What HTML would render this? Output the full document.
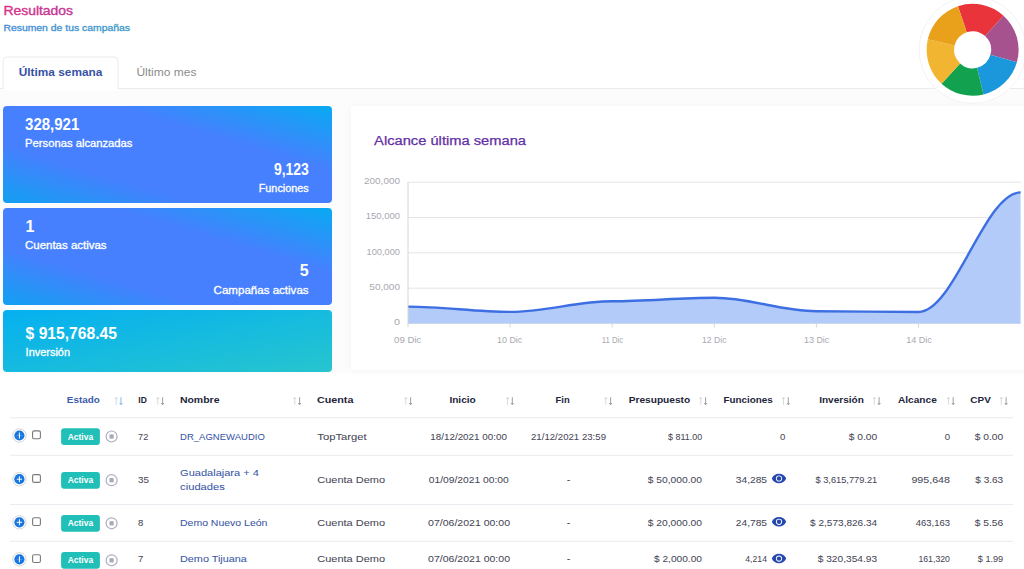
<!DOCTYPE html>
<html><head><meta charset="utf-8">
<style>
*{margin:0;padding:0}
html,body{width:1024px;height:569px;overflow:hidden;background:#fff}
svg{display:block;font-family:"Liberation Sans",sans-serif}
</style></head><body>
<svg width="1024" height="569" viewBox="0 0 1024 569">
<rect x="0" y="88" width="1024" height="481" fill="#fcfcfc"/>
<rect x="0" y="373" width="1024" height="196" fill="#ffffff"/>
<rect x="0" y="88" width="1024" height="1" fill="#ebebeb"/>
<path d="M3,89 V61 Q3,57 7,57 H114 Q118,57 118,61 V89 Z" fill="#fff" stroke="#ebebeb" stroke-width="1"/>
<rect x="3.5" y="88" width="114" height="2" fill="#fff"/>
<defs>
<linearGradient id="g1" x1="0" y1="1" x2="1" y2="0" gradientUnits="objectBoundingBox">
<stop offset="0" stop-color="#12a0f2"/><stop offset="0.3" stop-color="#4780fe"/><stop offset="0.66" stop-color="#4780fe"/><stop offset="1" stop-color="#08aaf2"/>
</linearGradient>
<linearGradient id="g3" x1="0" y1="0" x2="1" y2="1">
<stop offset="0" stop-color="#05b0f0"/><stop offset="1" stop-color="#26c5ce"/>
</linearGradient>
<linearGradient id="gt" x1="0" y1="0" x2="1" y2="0"><stop offset="0" stop-color="#d83287"/><stop offset="1" stop-color="#bf3595"/></linearGradient>
<linearGradient id="gs" x1="0" y1="0" x2="1" y2="0"><stop offset="0" stop-color="#3f8bd6"/><stop offset="1" stop-color="#3a9bc8"/></linearGradient>
<filter id="sh" x="-10%" y="-20%" width="120%" height="140%"><feGaussianBlur stdDeviation="5"/></filter>
</defs>
<rect x="3" y="106" width="329" height="97" rx="4" fill="url(#g1)"/>
<rect x="3" y="208" width="329" height="97" rx="4" fill="url(#g1)"/>
<rect x="3" y="310" width="329" height="62" rx="4" fill="url(#g3)"/>
<rect x="351" y="106" width="680" height="264" fill="#000" opacity="0.035" filter="url(#sh)"/>
<rect x="351" y="106" width="680" height="264" fill="#fff"/>
<line x1="408" y1="182.2" x2="1021" y2="182.2" stroke="#e4e4e4" stroke-width="1"/>
<line x1="408" y1="217.5" x2="1021" y2="217.5" stroke="#e4e4e4" stroke-width="1"/>
<line x1="408" y1="252.8" x2="1021" y2="252.8" stroke="#e4e4e4" stroke-width="1"/>
<line x1="408" y1="288.2" x2="1021" y2="288.2" stroke="#e4e4e4" stroke-width="1"/>
<line x1="408" y1="323.5" x2="1021" y2="323.5" stroke="#e4e4e4" stroke-width="1"/>
<text x="364" y="184.0" textLength="36.0" lengthAdjust="spacingAndGlyphs" font-size="9" fill="#a9a9b0">200,000</text>
<text x="365.8" y="219.3" textLength="34.2" lengthAdjust="spacingAndGlyphs" font-size="9" fill="#a9a9b0">150,000</text>
<text x="366.5" y="254.6" textLength="33.5" lengthAdjust="spacingAndGlyphs" font-size="9" fill="#a9a9b0">100,000</text>
<text x="369.3" y="290.0" textLength="30.7" lengthAdjust="spacingAndGlyphs" font-size="9" fill="#a9a9b0">50,000</text>
<text x="394" y="325.3" textLength="6.0" lengthAdjust="spacingAndGlyphs" font-size="9" fill="#a9a9b0">0</text>
<path d="M408.0,306.6 C443.7,306.6 474.4,311.9 510.1,311.9 C545.8,311.9 576.5,301.3 612.2,301.3 C647.9,301.3 678.6,297.8 714.3,297.8 C750.0,297.8 780.7,311.2 816.4,311.2 C852.1,311.2 882.8,312.0 918.5,312.0 C954.2,312.0 984.9,192.4 1020.6,192.4 L1020.6,323.5 L408.0,323.5 Z" fill="#b2cbf8"/>
<path d="M408.0,306.6 C443.7,306.6 474.4,311.9 510.1,311.9 C545.8,311.9 576.5,301.3 612.2,301.3 C647.9,301.3 678.6,297.8 714.3,297.8 C750.0,297.8 780.7,311.2 816.4,311.2 C852.1,311.2 882.8,312.0 918.5,312.0 C954.2,312.0 984.9,192.4 1020.6,192.4" fill="none" stroke="#3d6fe2" stroke-width="2.4"/>
<line x1="408" y1="182" x2="408" y2="327" stroke="#d6d6d6" stroke-width="1"/>
<line x1="510.1" y1="323.5" x2="510.1" y2="327.5" stroke="#d6d6d6" stroke-width="1"/>
<line x1="612.2" y1="323.5" x2="612.2" y2="327.5" stroke="#d6d6d6" stroke-width="1"/>
<line x1="714.3" y1="323.5" x2="714.3" y2="327.5" stroke="#d6d6d6" stroke-width="1"/>
<line x1="816.4" y1="323.5" x2="816.4" y2="327.5" stroke="#d6d6d6" stroke-width="1"/>
<line x1="918.5" y1="323.5" x2="918.5" y2="327.5" stroke="#d6d6d6" stroke-width="1"/>
<text x="394" y="342.8" textLength="27.4" lengthAdjust="spacingAndGlyphs" font-size="9" fill="#a9a9b0">09 Dic</text>
<text x="497" y="342.8" textLength="25.3" lengthAdjust="spacingAndGlyphs" font-size="9" fill="#a9a9b0">10 Dic</text>
<text x="601.8" y="342.8" textLength="21.4" lengthAdjust="spacingAndGlyphs" font-size="9" fill="#a9a9b0">11 Dic</text>
<text x="702" y="342.8" textLength="24.6" lengthAdjust="spacingAndGlyphs" font-size="9" fill="#a9a9b0">12 Dic</text>
<text x="804" y="342.8" textLength="25.3" lengthAdjust="spacingAndGlyphs" font-size="9" fill="#a9a9b0">13 Dic</text>
<text x="906.2" y="342.8" textLength="25.7" lengthAdjust="spacingAndGlyphs" font-size="9" fill="#a9a9b0">14 Dic</text>
<circle cx="972.6" cy="50" r="53.5" fill="#fff" stroke="#f3f3f3" stroke-width="1"/>
<path d="M958.00,6.18 A46,46 0 0 1 1003.50,15.72 L985.03,36.10 A18.5,18.5 0 0 0 966.73,32.26 Z" fill="#e9343c"/>
<path d="M1003.50,15.72 A46,46 0 0 1 1016.88,62.25 L990.41,54.81 A18.5,18.5 0 0 0 985.03,36.10 Z" fill="#a6528f"/>
<path d="M1016.88,62.25 A46,46 0 0 1 983.57,94.47 L977.01,67.77 A18.5,18.5 0 0 0 990.41,54.81 Z" fill="#1b98dc"/>
<path d="M983.57,94.47 A46,46 0 0 1 941.52,83.71 L960.10,63.44 A18.5,18.5 0 0 0 977.01,67.77 Z" fill="#12a24f"/>
<path d="M941.52,83.71 A46,46 0 0 1 927.80,39.37 L954.58,45.61 A18.5,18.5 0 0 0 960.10,63.44 Z" fill="#f1b531"/>
<path d="M927.80,39.37 A46,46 0 0 1 958.00,6.18 L966.73,32.26 A18.5,18.5 0 0 0 954.58,45.61 Z" fill="#e9a11b"/>
<rect x="10" y="417.3" width="1003" height="1" fill="#eaeaf0"/>
<rect x="10" y="454.8" width="1003" height="1" fill="#eaeaf0"/>
<rect x="10" y="504.0" width="1003" height="1" fill="#eaeaf0"/>
<rect x="10" y="540.8" width="1003" height="1" fill="#eaeaf0"/>
<path d="M116.2,404.8 V398.0" stroke="#c9cbe0" stroke-width="0.8"/><path d="M114.9,399.0 L116.2,397.2 L117.5,399.0" fill="none" stroke="#c9cbe0" stroke-width="0.8"/><path d="M121.0,397.2 V404.0" stroke="#5fa4ea" stroke-width="0.8"/><path d="M119.7,403.0 L121.0,404.8 L122.3,403.0" fill="none" stroke="#5fa4ea" stroke-width="0.8"/>
<path d="M157.8,404.8 V398.0" stroke="#cfcfd4" stroke-width="0.8"/><path d="M156.5,399.0 L157.8,397.2 L159.10000000000002,399.0" fill="none" stroke="#cfcfd4" stroke-width="0.8"/><path d="M162.6,397.2 V404.0" stroke="#85858d" stroke-width="0.8"/><path d="M161.29999999999998,403.0 L162.6,404.8 L163.9,403.0" fill="none" stroke="#85858d" stroke-width="0.8"/>
<path d="M294.8,404.8 V398.0" stroke="#cfcfd4" stroke-width="0.8"/><path d="M293.5,399.0 L294.8,397.2 L296.1,399.0" fill="none" stroke="#cfcfd4" stroke-width="0.8"/><path d="M299.6,397.2 V404.0" stroke="#85858d" stroke-width="0.8"/><path d="M298.3,403.0 L299.6,404.8 L300.90000000000003,403.0" fill="none" stroke="#85858d" stroke-width="0.8"/>
<path d="M405.8,404.8 V398.0" stroke="#cfcfd4" stroke-width="0.8"/><path d="M404.5,399.0 L405.8,397.2 L407.1,399.0" fill="none" stroke="#cfcfd4" stroke-width="0.8"/><path d="M410.6,397.2 V404.0" stroke="#85858d" stroke-width="0.8"/><path d="M409.3,403.0 L410.6,404.8 L411.90000000000003,403.0" fill="none" stroke="#85858d" stroke-width="0.8"/>
<path d="M507.5,404.8 V398.0" stroke="#cfcfd4" stroke-width="0.8"/><path d="M506.2,399.0 L507.5,397.2 L508.8,399.0" fill="none" stroke="#cfcfd4" stroke-width="0.8"/><path d="M512.3,397.2 V404.0" stroke="#85858d" stroke-width="0.8"/><path d="M510.99999999999994,403.0 L512.3,404.8 L513.5999999999999,403.0" fill="none" stroke="#85858d" stroke-width="0.8"/>
<path d="M605.8,404.8 V398.0" stroke="#cfcfd4" stroke-width="0.8"/><path d="M604.5,399.0 L605.8,397.2 L607.0999999999999,399.0" fill="none" stroke="#cfcfd4" stroke-width="0.8"/><path d="M610.6,397.2 V404.0" stroke="#85858d" stroke-width="0.8"/><path d="M609.3000000000001,403.0 L610.6,404.8 L611.9,403.0" fill="none" stroke="#85858d" stroke-width="0.8"/>
<path d="M700.8,404.8 V398.0" stroke="#cfcfd4" stroke-width="0.8"/><path d="M699.5,399.0 L700.8,397.2 L702.0999999999999,399.0" fill="none" stroke="#cfcfd4" stroke-width="0.8"/><path d="M705.6,397.2 V404.0" stroke="#85858d" stroke-width="0.8"/><path d="M704.3000000000001,403.0 L705.6,404.8 L706.9,403.0" fill="none" stroke="#85858d" stroke-width="0.8"/>
<path d="M783.5,404.8 V398.0" stroke="#cfcfd4" stroke-width="0.8"/><path d="M782.2,399.0 L783.5,397.2 L784.8,399.0" fill="none" stroke="#cfcfd4" stroke-width="0.8"/><path d="M788.3000000000001,397.2 V404.0" stroke="#85858d" stroke-width="0.8"/><path d="M787.0000000000001,403.0 L788.3000000000001,404.8 L789.6,403.0" fill="none" stroke="#85858d" stroke-width="0.8"/>
<path d="M874.3,404.8 V398.0" stroke="#cfcfd4" stroke-width="0.8"/><path d="M873.0,399.0 L874.3,397.2 L875.5999999999999,399.0" fill="none" stroke="#cfcfd4" stroke-width="0.8"/><path d="M879.1,397.2 V404.0" stroke="#85858d" stroke-width="0.8"/><path d="M877.8000000000001,403.0 L879.1,404.8 L880.4,403.0" fill="none" stroke="#85858d" stroke-width="0.8"/>
<path d="M948.4,404.8 V398.0" stroke="#cfcfd4" stroke-width="0.8"/><path d="M947.1,399.0 L948.4,397.2 L949.6999999999999,399.0" fill="none" stroke="#cfcfd4" stroke-width="0.8"/><path d="M953.2,397.2 V404.0" stroke="#85858d" stroke-width="0.8"/><path d="M951.9000000000001,403.0 L953.2,404.8 L954.5,403.0" fill="none" stroke="#85858d" stroke-width="0.8"/>
<path d="M1001.3,404.8 V398.0" stroke="#cfcfd4" stroke-width="0.8"/><path d="M1000.0,399.0 L1001.3,397.2 L1002.5999999999999,399.0" fill="none" stroke="#cfcfd4" stroke-width="0.8"/><path d="M1006.1,397.2 V404.0" stroke="#85858d" stroke-width="0.8"/><path d="M1004.8000000000001,403.0 L1006.1,404.8 L1007.4,403.0" fill="none" stroke="#85858d" stroke-width="0.8"/>
<circle cx="19.4" cy="435.5" r="6.7" fill="#fff" stroke="#d6d6d6" stroke-width="1"/>
<circle cx="19.4" cy="435.5" r="5.1" fill="#1877e0"/>
<path d="M19.4,432.5 V438.5" stroke="#fff" stroke-width="1"/>
<path d="M16.7,435.5 H22.1" stroke="#fff" stroke-width="0.5" opacity="0.5"/>
<rect x="32.6" y="430.9" width="7.8" height="7.8" rx="1.5" fill="#fff" stroke="#7a7a7a" stroke-width="1.1"/>
<rect x="61.1" y="428.2" width="38.8" height="16.8" rx="3" fill="#20bfb8"/>
<text x="67.7" y="439.6" textLength="25.4" lengthAdjust="spacingAndGlyphs" font-size="8.3" font-weight="bold" fill="#fff">Activa</text>
<circle cx="111.6" cy="436.5" r="5.5" fill="none" stroke="#aeaebf" stroke-width="1.2"/>
<rect x="109.5" y="434.4" width="4.2" height="4.2" fill="#a8a8bc"/>
<circle cx="19.4" cy="479.2" r="6.7" fill="#fff" stroke="#d6d6d6" stroke-width="1"/>
<circle cx="19.4" cy="479.2" r="5.1" fill="#1877e0"/>
<path d="M19.4,476.2 V482.2" stroke="#fff" stroke-width="1"/>
<path d="M16.7,479.2 H22.1" stroke="#fff" stroke-width="1" opacity="1"/>
<rect x="32.6" y="474.59999999999997" width="7.8" height="7.8" rx="1.5" fill="#fff" stroke="#7a7a7a" stroke-width="1.1"/>
<rect x="61.1" y="471.9" width="38.8" height="16.8" rx="3" fill="#20bfb8"/>
<text x="67.7" y="483.3" textLength="25.4" lengthAdjust="spacingAndGlyphs" font-size="8.3" font-weight="bold" fill="#fff">Activa</text>
<circle cx="111.6" cy="480.2" r="5.5" fill="none" stroke="#aeaebf" stroke-width="1.2"/>
<rect x="109.5" y="478.09999999999997" width="4.2" height="4.2" fill="#a8a8bc"/>
<circle cx="19.4" cy="522.3" r="6.7" fill="#fff" stroke="#d6d6d6" stroke-width="1"/>
<circle cx="19.4" cy="522.3" r="5.1" fill="#1877e0"/>
<path d="M19.4,519.3 V525.3" stroke="#fff" stroke-width="1"/>
<path d="M16.7,522.3 H22.1" stroke="#fff" stroke-width="1" opacity="1"/>
<rect x="32.6" y="517.6999999999999" width="7.8" height="7.8" rx="1.5" fill="#fff" stroke="#7a7a7a" stroke-width="1.1"/>
<rect x="61.1" y="515.0" width="38.8" height="16.8" rx="3" fill="#20bfb8"/>
<text x="67.7" y="526.4" textLength="25.4" lengthAdjust="spacingAndGlyphs" font-size="8.3" font-weight="bold" fill="#fff">Activa</text>
<circle cx="111.6" cy="523.3" r="5.5" fill="none" stroke="#aeaebf" stroke-width="1.2"/>
<rect x="109.5" y="521.1999999999999" width="4.2" height="4.2" fill="#a8a8bc"/>
<circle cx="19.4" cy="559.3" r="6.7" fill="#fff" stroke="#d6d6d6" stroke-width="1"/>
<circle cx="19.4" cy="559.3" r="5.1" fill="#1877e0"/>
<path d="M19.4,556.3 V562.3" stroke="#fff" stroke-width="1"/>
<path d="M16.7,559.3 H22.1" stroke="#fff" stroke-width="0.5" opacity="0.5"/>
<rect x="32.6" y="554.6999999999999" width="7.8" height="7.8" rx="1.5" fill="#fff" stroke="#7a7a7a" stroke-width="1.1"/>
<rect x="61.1" y="552.0" width="38.8" height="16.8" rx="3" fill="#20bfb8"/>
<text x="67.7" y="563.4" textLength="25.4" lengthAdjust="spacingAndGlyphs" font-size="8.3" font-weight="bold" fill="#fff">Activa</text>
<circle cx="111.6" cy="560.3" r="5.5" fill="none" stroke="#aeaebf" stroke-width="1.2"/>
<rect x="109.5" y="558.1999999999999" width="4.2" height="4.2" fill="#a8a8bc"/>
<path d="M771.8,478.5 C774,472.2 784,472.2 786.2,478.5 C784,484.8 774,484.8 771.8,478.5 Z" fill="#2447b0"/><circle cx="779" cy="478.5" r="3.1" fill="#fff"/><circle cx="779" cy="478.5" r="2.2" fill="#2447b0"/>
<path d="M771.8,521.8 C774,515.5 784,515.5 786.2,521.8 C784,528.0999999999999 774,528.0999999999999 771.8,521.8 Z" fill="#2447b0"/><circle cx="779" cy="521.8" r="3.1" fill="#fff"/><circle cx="779" cy="521.8" r="2.2" fill="#2447b0"/>
<path d="M771.8,558.6 C774,552.3000000000001 784,552.3000000000001 786.2,558.6 C784,564.9 774,564.9 771.8,558.6 Z" fill="#2447b0"/><circle cx="779" cy="558.6" r="3.1" fill="#fff"/><circle cx="779" cy="558.6" r="2.2" fill="#2447b0"/>
<text x="3.4" y="14.7" textLength="69.7" lengthAdjust="spacingAndGlyphs" font-size="12.8" fill="url(#gt)" stroke="url(#gt)" stroke-width="0.35">Resultados</text>
<text x="3.4" y="31.4" textLength="126.6" lengthAdjust="spacingAndGlyphs" font-size="9.4" fill="url(#gs)" stroke="url(#gs)" stroke-width="0.3">Resumen de tus campañas</text>
<text x="18.7" y="75.7" textLength="83.7" lengthAdjust="spacingAndGlyphs" font-size="11" fill="#3752a5" font-weight="bold">Última semana</text>
<text x="136.4" y="75.8" textLength="60.0" lengthAdjust="spacingAndGlyphs" font-size="11" fill="#8b8b8b">Último mes</text>
<text x="25.1" y="130" textLength="54.2" lengthAdjust="spacingAndGlyphs" font-size="16" fill="#ffffff" font-weight="bold">328,921</text>
<text x="25.1" y="147" textLength="107.4" lengthAdjust="spacingAndGlyphs" font-size="10.2" fill="#ffffff" stroke="#ffffff" stroke-width="0.3">Personas alcanzadas</text>
<text x="274" y="175" textLength="34.8" lengthAdjust="spacingAndGlyphs" font-size="16" fill="#ffffff" font-weight="bold">9,123</text>
<text x="258.7" y="191.5" textLength="50.1" lengthAdjust="spacingAndGlyphs" font-size="10.2" fill="#ffffff" stroke="#ffffff" stroke-width="0.3">Funciones</text>
<text x="25.6" y="231.8" font-size="16" fill="#ffffff" font-weight="bold">1</text>
<text x="25" y="248.9" textLength="81.6" lengthAdjust="spacingAndGlyphs" font-size="10.2" fill="#ffffff" stroke="#ffffff" stroke-width="0.3">Cuentas activas</text>
<text x="308.6" y="276.3" text-anchor="end" font-size="16" fill="#ffffff" font-weight="bold">5</text>
<text x="213.6" y="294" textLength="95.0" lengthAdjust="spacingAndGlyphs" font-size="10.2" fill="#ffffff" stroke="#ffffff" stroke-width="0.3">Campañas activas</text>
<text x="25.6" y="339.4" textLength="91.3" lengthAdjust="spacingAndGlyphs" font-size="16" fill="#ffffff" font-weight="bold">$ 915,768.45</text>
<text x="25.6" y="355.5" textLength="44.4" lengthAdjust="spacingAndGlyphs" font-size="10.2" fill="#ffffff" stroke="#ffffff" stroke-width="0.3">Inversión</text>
<text x="374.1" y="144.6" textLength="151.9" lengthAdjust="spacingAndGlyphs" font-size="12.3" fill="#6330a5" stroke="#6330a5" stroke-width="0.25">Alcance última semana</text>
<text x="66.8" y="403.3" textLength="33.0" lengthAdjust="spacingAndGlyphs" font-size="9.3" fill="#3b5bab" font-weight="bold">Estado</text>
<text x="138.3" y="403.3" textLength="8.5" lengthAdjust="spacingAndGlyphs" font-size="9.3" fill="#23243a" font-weight="bold">ID</text>
<text x="179.9" y="403.3" textLength="39.6" lengthAdjust="spacingAndGlyphs" font-size="9.3" fill="#23243a" font-weight="bold">Nombre</text>
<text x="316.9" y="403.3" textLength="36.5" lengthAdjust="spacingAndGlyphs" font-size="9.3" fill="#23243a" font-weight="bold">Cuenta</text>
<text x="449.4" y="403.3" textLength="26.4" lengthAdjust="spacingAndGlyphs" font-size="9.3" fill="#23243a" font-weight="bold">Inicio</text>
<text x="555.6" y="403.3" textLength="14.1" lengthAdjust="spacingAndGlyphs" font-size="9.3" fill="#23243a" font-weight="bold">Fin</text>
<text x="628.7" y="403.3" textLength="61.5" lengthAdjust="spacingAndGlyphs" font-size="9.3" fill="#23243a" font-weight="bold">Presupuesto</text>
<text x="723.4" y="403.3" textLength="49.3" lengthAdjust="spacingAndGlyphs" font-size="9.3" fill="#23243a" font-weight="bold">Funciones</text>
<text x="819.2" y="403.3" textLength="44.6" lengthAdjust="spacingAndGlyphs" font-size="9.3" fill="#23243a" font-weight="bold">Inversión</text>
<text x="898" y="403.3" textLength="38.8" lengthAdjust="spacingAndGlyphs" font-size="9.3" fill="#23243a" font-weight="bold">Alcance</text>
<text x="970.3" y="403.3" textLength="20.5" lengthAdjust="spacingAndGlyphs" font-size="9.3" fill="#23243a" font-weight="bold">CPV</text>
<text x="138.1" y="439.6" textLength="10.2" lengthAdjust="spacingAndGlyphs" font-size="9.6" fill="#474756" stroke="#474756" stroke-width="0.05">72</text>
<text x="317.3" y="439.6" textLength="49.3" lengthAdjust="spacingAndGlyphs" font-size="9.6" fill="#474756" stroke="#474756" stroke-width="0.05">TopTarget</text>
<text x="430.3" y="439.6" textLength="76.6" lengthAdjust="spacingAndGlyphs" font-size="9.6" fill="#474756" stroke="#474756" stroke-width="0.05">18/12/2021 00:00</text>
<text x="531" y="439.6" textLength="75.0" lengthAdjust="spacingAndGlyphs" font-size="9.6" fill="#474756" stroke="#474756" stroke-width="0.05">21/12/2021 23:59</text>
<text x="668.1" y="439.6" textLength="34.1" lengthAdjust="spacingAndGlyphs" font-size="9.6" fill="#474756" stroke="#474756" stroke-width="0.05">$ 811.00</text>
<text x="785.4" y="439.6" text-anchor="end" font-size="9.6" fill="#474756" stroke="#474756" stroke-width="0.05">0</text>
<text x="848.7" y="439.6" textLength="28.5" lengthAdjust="spacingAndGlyphs" font-size="9.6" fill="#474756" stroke="#474756" stroke-width="0.05">$ 0.00</text>
<text x="950" y="439.6" text-anchor="end" font-size="9.6" fill="#474756" stroke="#474756" stroke-width="0.05">0</text>
<text x="974.7" y="439.6" textLength="28.5" lengthAdjust="spacingAndGlyphs" font-size="9.6" fill="#474756" stroke="#474756" stroke-width="0.05">$ 0.00</text>
<text x="180.1" y="439.6" textLength="84.7" lengthAdjust="spacingAndGlyphs" font-size="9.6" fill="#3a56a5" stroke="#3a56a5" stroke-width="0.05">DR_AGNEWAUDIO</text>
<text x="138" y="483.1" textLength="11.0" lengthAdjust="spacingAndGlyphs" font-size="9.6" fill="#474756" stroke="#474756" stroke-width="0.05">35</text>
<text x="317.3" y="483.1" textLength="67.7" lengthAdjust="spacingAndGlyphs" font-size="9.6" fill="#474756" stroke="#474756" stroke-width="0.05">Cuenta Demo</text>
<text x="428.8" y="483.1" textLength="80.0" lengthAdjust="spacingAndGlyphs" font-size="9.6" fill="#474756" stroke="#474756" stroke-width="0.05">01/09/2021 00:00</text>
<text x="647.8" y="483.1" textLength="54.2" lengthAdjust="spacingAndGlyphs" font-size="9.6" fill="#474756" stroke="#474756" stroke-width="0.05">$ 50,000.00</text>
<text x="735.8" y="483.1" textLength="31.2" lengthAdjust="spacingAndGlyphs" font-size="9.6" fill="#474756" stroke="#474756" stroke-width="0.05">34,285</text>
<text x="815.5" y="483.1" textLength="61.7" lengthAdjust="spacingAndGlyphs" font-size="9.6" fill="#474756" stroke="#474756" stroke-width="0.05">$ 3,615,779.21</text>
<text x="911.4" y="483.1" textLength="38.6" lengthAdjust="spacingAndGlyphs" font-size="9.6" fill="#474756" stroke="#474756" stroke-width="0.05">995,648</text>
<text x="975.3" y="483.1" textLength="27.9" lengthAdjust="spacingAndGlyphs" font-size="9.6" fill="#474756" stroke="#474756" stroke-width="0.05">$ 3.63</text>
<text x="180.1" y="476.3" textLength="78.8" lengthAdjust="spacingAndGlyphs" font-size="9.6" fill="#3a56a5" stroke="#3a56a5" stroke-width="0.05">Guadalajara + 4</text>
<text x="180.1" y="490.2" textLength="44.8" lengthAdjust="spacingAndGlyphs" font-size="9.6" fill="#3a56a5" stroke="#3a56a5" stroke-width="0.05">ciudades</text>
<text x="138" y="525.6" font-size="9.6" fill="#474756" stroke="#474756" stroke-width="0.05">8</text>
<text x="317.3" y="525.6" textLength="67.7" lengthAdjust="spacingAndGlyphs" font-size="9.6" fill="#474756" stroke="#474756" stroke-width="0.05">Cuenta Demo</text>
<text x="428.1" y="525.6" textLength="81.9" lengthAdjust="spacingAndGlyphs" font-size="9.6" fill="#474756" stroke="#474756" stroke-width="0.05">07/06/2021 00:00</text>
<text x="647.8" y="525.6" textLength="54.2" lengthAdjust="spacingAndGlyphs" font-size="9.6" fill="#474756" stroke="#474756" stroke-width="0.05">$ 20,000.00</text>
<text x="735.8" y="525.6" textLength="31.2" lengthAdjust="spacingAndGlyphs" font-size="9.6" fill="#474756" stroke="#474756" stroke-width="0.05">24,785</text>
<text x="810.1" y="525.6" textLength="67.1" lengthAdjust="spacingAndGlyphs" font-size="9.6" fill="#474756" stroke="#474756" stroke-width="0.05">$ 2,573,826.34</text>
<text x="915.8" y="525.6" textLength="34.2" lengthAdjust="spacingAndGlyphs" font-size="9.6" fill="#474756" stroke="#474756" stroke-width="0.05">463,163</text>
<text x="974.7" y="525.6" textLength="28.5" lengthAdjust="spacingAndGlyphs" font-size="9.6" fill="#474756" stroke="#474756" stroke-width="0.05">$ 5.56</text>
<text x="180" y="525.6" textLength="87.4" lengthAdjust="spacingAndGlyphs" font-size="9.6" fill="#3a56a5" stroke="#3a56a5" stroke-width="0.05">Demo Nuevo León</text>
<text x="138" y="562.2" font-size="9.6" fill="#474756" stroke="#474756" stroke-width="0.05">7</text>
<text x="317.3" y="562.2" textLength="67.7" lengthAdjust="spacingAndGlyphs" font-size="9.6" fill="#474756" stroke="#474756" stroke-width="0.05">Cuenta Demo</text>
<text x="428.1" y="562.2" textLength="81.9" lengthAdjust="spacingAndGlyphs" font-size="9.6" fill="#474756" stroke="#474756" stroke-width="0.05">07/06/2021 00:00</text>
<text x="654" y="562.2" textLength="48.0" lengthAdjust="spacingAndGlyphs" font-size="9.6" fill="#474756" stroke="#474756" stroke-width="0.05">$ 2,000.00</text>
<text x="745.3" y="562.2" textLength="21.7" lengthAdjust="spacingAndGlyphs" font-size="9.6" fill="#474756" stroke="#474756" stroke-width="0.05">4,214</text>
<text x="817.7" y="562.2" textLength="59.5" lengthAdjust="spacingAndGlyphs" font-size="9.6" fill="#474756" stroke="#474756" stroke-width="0.05">$ 320,354.93</text>
<text x="918.4" y="562.2" textLength="31.6" lengthAdjust="spacingAndGlyphs" font-size="9.6" fill="#474756" stroke="#474756" stroke-width="0.05">161,320</text>
<text x="977.8" y="562.2" textLength="25.4" lengthAdjust="spacingAndGlyphs" font-size="9.6" fill="#474756" stroke="#474756" stroke-width="0.05">$ 1.99</text>
<text x="180" y="562.2" textLength="66.9" lengthAdjust="spacingAndGlyphs" font-size="9.6" fill="#3a56a5" stroke="#3a56a5" stroke-width="0.05">Demo Tijuana</text>
<text x="568.7" y="483.1" text-anchor="middle" font-size="9.6" fill="#474756" stroke="#474756" stroke-width="0.15">-</text>
<text x="568.7" y="525.6" text-anchor="middle" font-size="9.6" fill="#474756" stroke="#474756" stroke-width="0.15">-</text>
<text x="568.7" y="562.2" text-anchor="middle" font-size="9.6" fill="#474756" stroke="#474756" stroke-width="0.15">-</text>
</svg>
</body></html>
